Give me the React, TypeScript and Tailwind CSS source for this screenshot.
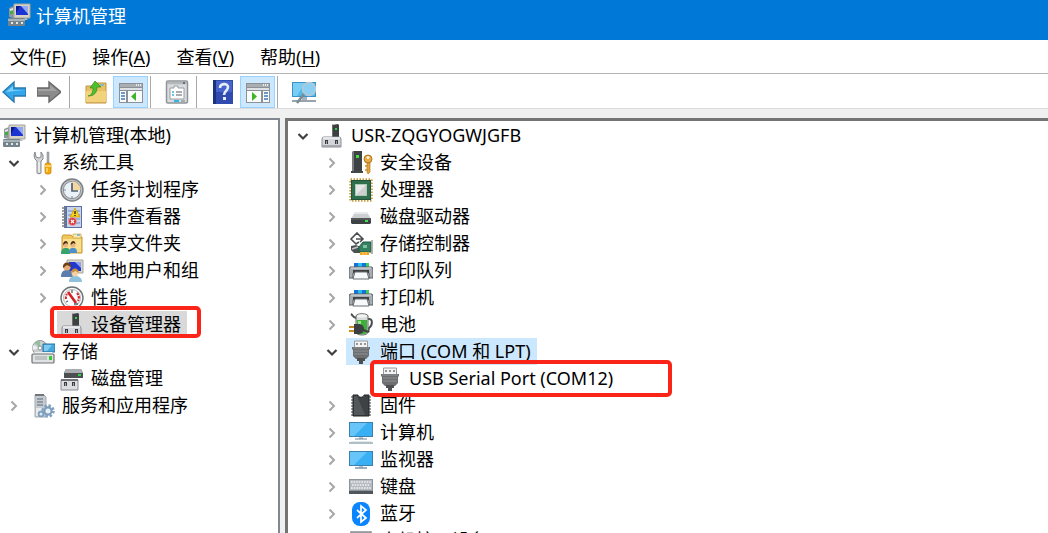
import type { ReactNode } from "react";
import clsx from "clsx";

const Svg = ({ children }: { children: ReactNode }) => (
  <svg viewBox="0 0 24 24" className="h-6 w-6 shrink-0" aria-hidden="true">
    {children}
  </svg>
);

/* ---------- left tree icons ---------- */

const ComputerIcon = () => (
  <Svg>
    <path d="M2 5l5-2v12l-5-1z" fill="#8f979e" />
    <path d="M3 6l3-1v2L3 8z" fill="#dfe3e6" />
    <rect x="3" y="8" width="3" height="3" fill="#3fae3a" />
    <path d="M7 1h16v14H7z" fill="#d5d2c6" stroke="#a5a49c" strokeWidth="1" />
    <path d="M9 3h12v9H9z" fill="#1c35d2" />
    <path d="M14 3h7v8z" fill="#93a9f5" />
    <path d="M9 3h4l-4 7z" fill="#0a1a8c" />
    <path d="M12 15h7l2 2h-9z" fill="#b9b8ae" />
    <rect x="1" y="15" width="17" height="8" rx="1" fill="#75838b" />
    <path d="M1 17h17" stroke="#b8c4c9" strokeWidth="1.5" />
    <path d="M4 19h2v2H4zM9 19h2v2H9zM14 19h2v2h-2z" fill="#e2e8ea" />
  </Svg>
);

const ToolsIcon = () => (
  <Svg>
    <path
      d="M4 1L3 4l1 4 2 2v12c0 1 4 1 4 0V10l2-2V4l-2-3v5L8 7 5 6z"
      fill="#d3d6d8"
      stroke="#85898c"
      strokeWidth="1"
    />
    <path d="M8 11v10" stroke="#fff" strokeWidth="1" />
    <path d="M16 1h2v11h-2z" fill="#a9adb0" stroke="#7c8184" strokeWidth=".5" />
    <rect x="14" y="12" width="6" height="11" rx="2" fill="#f5a90b" stroke="#c47a00" strokeWidth=".7" />
    <path d="M14 15h6M16 17v4" stroke="#ffdf7e" strokeWidth="1.4" />
  </Svg>
);

const ClockIcon = () => (
  <Svg>
    <circle cx="12" cy="12" r="11" fill="#bfc2c4" stroke="#7d8184" strokeWidth="1.4" />
    <circle cx="12" cy="12" r="8.6" fill="#eaf1f8" stroke="#8c9094" strokeWidth="1" />
    <path d="M12 3.5a8.5 8.5 0 018.5 8.5H12z" fill="#f3d9a1" />
    <path d="M12 5v8h6" fill="none" stroke="#54606c" strokeWidth="1.7" />
    <path d="M12 18v2M4 12h2" stroke="#8b98a4" strokeWidth="1.2" />
  </Svg>
);

const EventIcon = () => (
  <Svg>
    <path d="M4 1h18v22H4z" fill="#5c6f9e" />
    <path d="M7 2h14v20H7z" fill="#c6d4ee" />
    <path d="M8 6h12M8 10h12M8 14h12M8 18h12" stroke="#6f8bc4" strokeWidth="1" />
    <path d="M2 3h4M2 6h4M2 9h4M2 12h4M2 15h4M2 18h4M2 21h4" stroke="#7b8087" strokeWidth="1.3" />
    <path d="M15 3l5 9H10z" fill="#fbd21b" stroke="#c79a00" strokeWidth=".7" />
    <path d="M15 6v3M15 10v1" stroke="#30280a" strokeWidth="1.4" />
    <circle cx="12.5" cy="16.5" r="4" fill="#d9383a" stroke="#f3b5b5" strokeWidth=".6" />
    <path d="M11 15l3 3M14 15l-3 3" stroke="#fff" strokeWidth="1.2" />
  </Svg>
);

const SharedFolderIcon = () => (
  <Svg>
    <path d="M2 5l1-2h8l2 2h9v16H2z" fill="#efc55c" stroke="#c99a35" strokeWidth="1" />
    <path d="M13 2h8v4h-8z" fill="#fbe9b4" stroke="#cfa544" strokeWidth=".7" />
    <path d="M17 3h3" stroke="#4aa2e0" strokeWidth="1.2" />
    <path d="M3 7h18v13H3z" fill="#fadf8e" />
    <path d="M1 22c0-5 2-6 5-6s4 1 4 6z" fill="#35a36b" />
    <path d="M9 21c0-4 1-5 4-5s4 1 4 5z" fill="#4f8fc9" />
    <circle cx="5.500" cy="13" r="2.500" fill="#e8b483" />
    <path d="M3 13c0-5 5-5 5-1l-2-1z" fill="#4c2f17" />
    <circle cx="13" cy="13" r="2.500" fill="#e8b483" />
    <path d="M10.500 13c0-5 5-5 5-1l-2-1z" fill="#4c2f17" />
  </Svg>
);

const UsersIcon = () => (
  <Svg>
    <path d="M7 1h16v13H7z" fill="#d8d5c8" stroke="#a8a69b" strokeWidth="1" />
    <path d="M9 3h12v9H9z" fill="#2038cc" />
    <path d="M15 3h6v6z" fill="#8ba3f2" />
    <path d="M1 18c0-6 3-7 6-7s6 1 6 7z" fill="#5a7fae" />
    <circle cx="7" cy="8" r="3.600" fill="#e6ad72" />
    <path d="M3 9c-1-7 9-7 8-1L7 6z" fill="#6d4018" />
    <path d="M9 23c0-5 3-6 6-6s7 1 7 6z" fill="#8fc1dd" />
    <circle cx="15" cy="14" r="3.400" fill="#f5d2a2" />
    <path d="M11.500 14c-1-6 8-6 7 0l-3-2z" fill="#c98d3c" />
  </Svg>
);

const GaugeIcon = () => (
  <Svg>
    <circle cx="12" cy="12" r="11" fill="#fdfdfd" stroke="#6f7376" strokeWidth="1.400" />
    <circle cx="12" cy="12" r="8.500" fill="none" stroke="#b4b8ba" strokeWidth="1" />
    <path d="M6 13a7 7 0 011-5M17 7a7 7 0 011 8" fill="none" stroke="#d42b2f" strokeWidth="2.200" strokeDasharray="2.500 1" />
    <path d="M8 6l8 11" stroke="#d31f26" strokeWidth="2.600" />
    <path d="M12 4v3M6 16l2-1M14 18h4" stroke="#5f6366" strokeWidth="1.300" />
  </Svg>
);

const DevicesIcon = () => (
  <Svg>
    <path d="M12 1l6-1 1 1v13h-7z" fill="#3d4043" />
    <path d="M12 1l1-1v14h-1z" fill="#6c7073" />
    <rect x="15" y="4" width="2" height="2" fill="#36d13b" />
    <path d="M3 13h17l1 2v8H2v-8z" fill="#d4d5da" stroke="#8b8e94" strokeWidth="1" />
    <path d="M3 14h17" stroke="#f0f1f3" strokeWidth="1.500" />
    <path d="M5 16h3v4H5zM15 16h3v4h-3z" fill="#3b3d41" />
    <path d="M6 17h1v3H6zM16 17h1v3h-1z" fill="#9a9da2" />
    <path d="M2 22h19" stroke="#9b9ea6" strokeWidth="1.600" />
  </Svg>
);

const StorageIcon = () => (
  <Svg>
    <circle cx="9" cy="8" r="7.500" fill="#c9cdd0" stroke="#92979b" strokeWidth="1" />
    <path d="M9 8L4 3a7 7 0 015-2z" fill="#8dc29a" />
    <path d="M9 8l-7 2a7 7 0 010-5z" fill="#eef0f1" />
    <circle cx="9" cy="8" r="2" fill="#fff" stroke="#8b9094" strokeWidth="1" />
    <path d="M12 4h12v8H12z" fill="#47a8dd" stroke="#27739f" strokeWidth="1" />
    <path d="M13 5h8l-5 6h-3z" fill="#7ecbf1" />
    <path d="M2 14l2-2h17l2 2z" fill="#eceeef" />
    <rect x="1" y="14" width="22" height="9" rx="1" fill="#dfe1e2" stroke="#6e7274" strokeWidth="1.200" />
    <path d="M4 17h12M4 19h12" stroke="#a0a4a6" strokeWidth="1" />
    <rect x="18" y="16" width="3" height="4" fill="#38c93a" />
  </Svg>
);

const DiskManageIcon = () => (
  <Svg>
    <path d="M6 2h15l2 4v5H4V6z" fill="#4b4f52" />
    <path d="M6 2h15l2 4H4z" fill="#a9adaf" />
    <rect x="18" y="7" width="3" height="2" fill="#32d04b" />
    <path d="M1 13h17v10H1z" fill="#dcdde0" stroke="#8a8c91" strokeWidth="1" />
    <path d="M1 13h17" stroke="#6f7276" strokeWidth="2" />
    <path d="M4 15h3v4H4zM12 15h3v4h-3z" fill="#3b3d41" />
    <path d="M5 16h1v3H5zM13 16h1v3h-1z" fill="#a0a2a6" />
  </Svg>
);

const ServicesIcon = () => (
  <Svg>
    <path d="M4 1h9l2 2v20H4z" fill="#c5cbd0" stroke="#a3abb1" strokeWidth="1" />
    <path d="M4 0h9v2H4z" fill="#6f777d" />
    <path d="M6 5h6M6 8h6M6 11h6" stroke="#7f8a92" strokeWidth="1.300" />
    <path d="M5 14h6v8H5z" fill="#e6eaed" />
    <circle cx="17" cy="17" r="5" fill="none" stroke="#7fa1bf" strokeWidth="3.500" strokeDasharray="2.200 1.700" />
    <circle cx="17" cy="17" r="3.600" fill="#e8f0f6" stroke="#7c9ebc" strokeWidth="2.200" />
    <circle cx="10" cy="20" r="2.400" fill="#dce8f1" stroke="#7c9ebc" strokeWidth="1.700" />
  </Svg>
);

/* ---------- right tree icons ---------- */

const SecurityIcon = () => (
  <Svg>
    <path d="M3 1l2-1h8v20H3z" fill="#3f4245" />
    <path d="M3 1l2-1v20H3z" fill="#777b7e" />
    <rect x="7" y="4" width="3" height="3" fill="#3be13d" />
    <path d="M2 20h12v2H2z" fill="#45484b" />
    <circle cx="19" cy="8" r="4" fill="#e6ab45" stroke="#b17a1d" strokeWidth="1" />
    <circle cx="19" cy="6.500" r="1.300" fill="#fff" />
    <path d="M18 12h3v9l-2 2-1-2z" fill="#e3a53d" stroke="#b17a1d" strokeWidth=".7" />
    <path d="M17 14v2M17 18v2" stroke="#c8902f" strokeWidth="1.500" />
  </Svg>
);

const CpuIcon = () => (
  <Svg>
    <rect x="1.500" y="1.500" width="21" height="21" fill="none" stroke="#c79c3f" strokeWidth="2.400" strokeDasharray="1.500 1.500" />
    <rect x="2.500" y="2.500" width="19" height="19" fill="#2f6f4d" stroke="#235339" strokeWidth="1" />
    <rect x="6.500" y="6.500" width="11" height="11" fill="#cfcfcf" stroke="#a8cbb5" strokeWidth="1" />
    <path d="M7 7h10L7 17z" fill="#e6e6e6" />
  </Svg>
);

const DriveIcon = () => (
  <Svg>
    <path d="M6 7h12l4 7H2z" fill="#cdced0" />
    <path d="M6 7h12l1 2H5z" fill="#e8e9ea" />
    <path d="M2 13h20v5l-1 1H3l-1-1z" fill="#3f4245" />
    <path d="M2 14h20" stroke="#686c6f" strokeWidth="1" />
    <rect x="16" y="15" width="3" height="2" fill="#43e052" />
  </Svg>
);

const ControllerIcon = () => (
  <Svg>
    <path d="M2 14l5-1 5 2v6H5l-3-3z" fill="#4d5154" />
    <path d="M3 17l6-2" stroke="#c2c5c7" strokeWidth="1.500" />
    <path d="M11 4L8 1 2 7l5 5 3-2M7 7h6M11 4l3 3-3 3" fill="none" stroke="#4a4d50" strokeWidth="1.600" />
    <path d="M10 15l4-5h8v10H10z" fill="#348060" stroke="#205a40" strokeWidth="1" />
    <path d="M14 13h4v3h-4z" fill="#7fc0a0" />
    <path d="M23 8v14" stroke="#9da1a4" strokeWidth="1.600" />
    <path d="M11 20h9v3h-9z" fill="#f2a51f" />
    <path d="M14 20v3M17 20v3" stroke="#fde0a0" strokeWidth=".8" />
  </Svg>
);

const PrinterIcon = () => (
  <Svg>
    <path d="M5 4h15v4H5z" fill="#1673d6" />
    <path d="M9 4h4v4H9z" fill="#27bdf0" />
    <path d="M17 4h3v4h-3z" fill="#3ccf5a" />
    <path d="M1 8h22l1 2v9h-4v-5H4v5H0v-9z" fill="#a7adb2" stroke="#565b5f" strokeWidth="1" />
    <path d="M2 9h20" stroke="#d9dde0" strokeWidth="1" />
    <path d="M4 11h16v3H4z" fill="#3b4043" />
    <path d="M6 13h12l2 7H4z" fill="#f8f9fa" stroke="#6b7074" strokeWidth="1" />
  </Svg>
);

const BatteryIcon = () => (
  <Svg>
    <path d="M19 6c5-1 5 6 1 9l-1 4" fill="none" stroke="#4b4e50" strokeWidth="2" />
    <path d="M2 1c2 1 1 3 5 4" fill="none" stroke="#4b4e50" strokeWidth="2" />
    <path d="M7 3c0-3 12-3 12 0v16c0 4-12 4-12 0z" fill="#d6dcd8" stroke="#5f6664" strokeWidth="1" />
    <path d="M8 7h10v12c0 3-10 3-10 0z" fill="#3fae3a" />
    <path d="M9 8h3v12H9z" fill="#9be08f" />
    <ellipse cx="13" cy="3" rx="5" ry="1.700" fill="#f0f3f1" />
    <path d="M5 11h4c4 0 6 2 6 5s-2 5-6 5H5z" fill="#3c3f41" />
    <path d="M0 14h5M0 18h5" stroke="#c58f24" strokeWidth="2" />
    <path d="M14 17c3 0 4 3 6 1" fill="none" stroke="#3c3f41" strokeWidth="2" />
  </Svg>
);

const PortIcon = () => (
  <Svg>
    <path d="M5.500 1h13v7h-13z" fill="#f3f3f3" stroke="#9a9a9a" strokeWidth="1" />
    <path d="M7 3h2v2H7zM11 3h2v2h-2zM15 3h2v2h-2z" fill="#969696" />
    <path d="M3 7h18v2l-1 1v6l-3 3H7l-3-3v-6L3 9z" fill="#6d6f71" />
    <path d="M4 8h16M5 11h14M5 14h14" stroke="#8f9294" strokeWidth="1" />
    <path d="M8 18h8v3h-2v3h-4v-3H8z" fill="#4d4f51" />
  </Svg>
);

const FirmwareIcon = () => (
  <Svg>
    <path
      d="M2 3h3M2 6h3M2 9h3M2 12h3M2 15h3M2 18h3M2 21h3M19 3h3M19 6h3M19 9h3M19 12h3M19 15h3M19 18h3M19 21h3"
      stroke="#7b7f82"
      strokeWidth="1.600"
    />
    <path d="M4 1h5c0 3 6 3 6 0h5v21H4z" fill="#3f4245" stroke="#222426" strokeWidth="1" />
    <path d="M5 2h3l8 19H5z" fill="#54575a" />
  </Svg>
);

const Screen = () => (
  <>
    <path d="M0 2h24v15H0z" fill="#3c81ad" />
    <path d="M1 3h22v13H1z" fill="#3ab0f4" />
    <path d="M1 3h17L5 16H1z" fill="#68c5fa" />
    <path d="M10 17h4v2h-4z" fill="#bcc6cc" />
  </>
);

const PcIcon = () => (
  <Svg>
    <g transform="translate(0 -1)">
      <Screen />
      <path d="M6 19h12" stroke="#6e8796" strokeWidth="1" />
      <path d="M2 21h20l2 3H0z" fill="#e3e8eb" />
      <path d="M0 23h24" stroke="#9fb0ba" strokeWidth="1.500" />
    </g>
  </Svg>
);

const MonitorIcon = () => (
  <Svg>
    <g transform="translate(0 1)">
      <Screen />
      <path d="M6 19h12" stroke="#7d98a8" strokeWidth="1.500" />
    </g>
  </Svg>
);

const KeyboardIcon = () => (
  <Svg>
    <path d="M0 4h24v15H0z" fill="#8d949a" />
    <path d="M1 5h22v10H1z" fill="#b4babf" />
    <path d="M2 7h20M3 10h18M2 13h20" stroke="#f1f3f4" strokeWidth="1.600" strokeDasharray="1.600 1" />
    <path d="M0 16h24v3H0z" fill="#50575c" />
  </Svg>
);

const BluetoothIcon = () => (
  <Svg>
    <rect x="3" y="0" width="18" height="24" rx="8" fill="#0a84ff" />
    <path d="M8 8l9 8-5 4V4l5 4-9 8" fill="none" stroke="#fff" strokeWidth="1.700" />
  </Svg>
);

const HidIcon = () => (
  <Svg>
    <path d="M2 3h20v16H2z" fill="#c9ccd0" stroke="#868b90" strokeWidth="1.500" />
  </Svg>
);

/* ---------- toolbar icons ---------- */

const ArrowIcon = ({ forward }: { forward?: boolean }) => (
  <Svg>
    {forward ? (
      <>
        <path d="M0 8h12V2l12 10-12 10v-6H0z" fill="#8b8b8b" stroke="#686868" strokeWidth="1.400" />
        <path d="M1 9h12V5l7 6H1z" fill="#a3a3a3" />
      </>
    ) : (
      <>
        <path d="M24 8H12V2L1 12l11 10v-6h12z" fill="#33a7ec" stroke="#2a78ab" strokeWidth="1.400" />
        <path d="M22 10H11V6l-7 6z" fill="#7fd0fa" />
      </>
    )}
  </Svg>
);

const FolderUpIcon = () => (
  <Svg>
    <path d="M2 6h8l2-3h10v20H2z" fill="#e9c064" stroke="#bf9440" strokeWidth="1" />
    <path d="M2 11h20v11H2z" fill="#f3d27c" />
    <path d="M16 5h4" stroke="#6cb5e6" strokeWidth="1.500" />
    <path d="M4 16c4-1 5-4 5-8H6l5-7 6 6h-4c0 6-3 9-9 9z" fill="#4fbf2f" stroke="#2f8f1b" strokeWidth=".7" />
  </Svg>
);

const PanelIcon = ({ right }: { right?: boolean }) => (
  <Svg>
    <path d="M0 3h24v20H0z" fill="#8b9197" />
    <path d="M1 4h22v3H1z" fill="#a9aeb3" />
    <path d="M17 5h1M19 5h1M21 5h1" stroke="#fff" strokeWidth="1.300" />
    <path d="M1 8h22v2H1z" fill="#dfe2e4" />
    <path d={right ? "M1 11h14v11H1zM17 11h6v11h-6z" : "M1 11h6v11H1zM9 11h14v11H9z"} fill="#fafbfb" />
    <path
      d={right ? "M18 13h4M18 16h4M18 19h4" : "M2 13h4M2 16h4M2 19h4"}
      stroke="#3d7ab8"
      strokeWidth="1.500"
    />
    <path d={right ? "M6 12l5 4.500-5 4.500z" : "M17 12l-5 4.500 5 4.500z"} fill="#3fb527" />
  </Svg>
);

const PropertiesIcon = () => (
  <Svg>
    <rect x="1.500" y="1" width="21" height="22" rx="1.500" fill="#d9dcde" stroke="#8f9498" strokeWidth="1.500" />
    <path d="M2 3h20" stroke="#b2b7ba" strokeWidth="2.500" />
    <path d="M18 3h2" stroke="#54595d" strokeWidth="1.500" />
    <path d="M5 8h4V6h4v2h6v11H5z" fill="#fff" stroke="#989da1" strokeWidth="1" />
    <path d="M7 12h2M7 15h2" stroke="#38b7e8" strokeWidth="1.500" />
    <path d="M11 12h6M11 15h6" stroke="#8d9296" strokeWidth="1.500" />
    <path d="M9 20h5v2H9z" fill="#2fb4ea" />
    <path d="M16 20h4v2h-4z" fill="#a8adb1" />
  </Svg>
);

const HelpIcon = () => (
  <Svg>
    <path d="M2 0h20v24H2z" fill="#2f4bb0" />
    <path d="M2 0h3v24H2z" fill="#1d327f" />
    <path d="M5 1h16v11H5z" fill="#4565cc" />
    <path d="M9 8c0-5 8-5 8-1 0 4-4 4-4 8" fill="none" stroke="#e8ecf8" strokeWidth="2.600" />
    <rect x="12" y="17" width="3" height="3" fill="#e8ecf8" />
  </Svg>
);

const ScanIcon = () => (
  <Svg>
    <path d="M0 2h24v15H0z" fill="#3793c8" />
    <path d="M1 3h22v13H1z" fill="#4fb8ec" />
    <path d="M1 3h12L5 16H1z" fill="#7acdf3" />
    <path d="M10 17h5v3h-5z" fill="#a6b3bb" />
    <path d="M0 21h24" stroke="#97a4ac" strokeWidth="2" />
    <circle cx="17" cy="9" r="6.500" fill="#8ccff2" stroke="#b3c9d6" strokeWidth="1.500" />
    <path d="M12 14l-7 9" stroke="#7c8a93" strokeWidth="2.600" />
  </Svg>
);

/* ---------- trees ---------- */

type Item = {
  label: string;
  icon: () => ReactNode;
  state?: "open" | "closed";
  // background of the selected row
  selected?: "gray" | "blue";
  mark?: "short" | "long";
  children?: Item[];
};

const consoleTree: Item[] = [
  {
    label: "系统工具",
    icon: ToolsIcon,
    state: "open",
    children: [
      { label: "任务计划程序", icon: ClockIcon, state: "closed" },
      { label: "事件查看器", icon: EventIcon, state: "closed" },
      { label: "共享文件夹", icon: SharedFolderIcon, state: "closed" },
      { label: "本地用户和组", icon: UsersIcon, state: "closed" },
      { label: "性能", icon: GaugeIcon, state: "closed" },
      { label: "设备管理器", icon: DevicesIcon, selected: "gray", mark: "short" },
    ],
  },
  {
    label: "存储",
    icon: StorageIcon,
    state: "open",
    children: [{ label: "磁盘管理", icon: DiskManageIcon }],
  },
  { label: "服务和应用程序", icon: ServicesIcon, state: "closed" },
];

const deviceTree: Item[] = [
  {
    label: "USR-ZQGYOGWJGFB",
    icon: DevicesIcon,
    state: "open",
    children: [
      { label: "安全设备", icon: SecurityIcon, state: "closed" },
      { label: "处理器", icon: CpuIcon, state: "closed" },
      { label: "磁盘驱动器", icon: DriveIcon, state: "closed" },
      { label: "存储控制器", icon: ControllerIcon, state: "closed" },
      { label: "打印队列", icon: PrinterIcon, state: "closed" },
      { label: "打印机", icon: PrinterIcon, state: "closed" },
      { label: "电池", icon: BatteryIcon, state: "closed" },
      {
        label: "端口 (COM 和 LPT)",
        icon: PortIcon,
        state: "open",
        selected: "blue",
        children: [{ label: "USB Serial Port (COM12)", icon: PortIcon, mark: "long" }],
      },
      { label: "固件", icon: FirmwareIcon, state: "closed" },
      { label: "计算机", icon: PcIcon, state: "closed" },
      { label: "监视器", icon: MonitorIcon, state: "closed" },
      { label: "键盘", icon: KeyboardIcon, state: "closed" },
      { label: "蓝牙", icon: BluetoothIcon, state: "closed" },
      { label: "人机接口设备", icon: HidIcon, state: "closed" },
    ],
  },
];

const Toggle = ({ item }: { item: Item }) => {
  if (!item.state) return <span className="w-5 shrink-0" />;
  const open = item.state === "open";
  return (
    <button
      type="button"
      aria-label={item.label}
      aria-expanded={open}
      className="flex h-5 w-5 shrink-0 items-center justify-center"
    >
      <svg viewBox="0 0 12 12" className="h-3 w-3" fill="none">
        {open ? (
          <path d="M1.500 4L6 8.500 10.500 4" stroke="#404040" strokeWidth="2.200" />
        ) : (
          <path d="M3.500 1.500L8 6l-4.500 4.500" stroke="#a6a6a6" strokeWidth="2" />
        )}
      </svg>
    </button>
  );
};

const Tree = ({ items }: { items: Item[] }) => (
  <ul>
    {items.map((item) => (
      <li key={item.label}>
        <div className="relative flex h-[27px] items-center gap-1">
          <Toggle item={item} />
          <span
            className={clsx(
              "flex h-full items-center gap-[7px] pr-[6px] pl-[3px] whitespace-nowrap",
              item.selected === "gray" && "bg-[#d9d9d9]",
              item.selected === "blue" && "bg-[#cce8ff]"
            )}
          >
            <item.icon />
            {item.label}
          </span>
          {item.mark === "short" && (
            <span className="absolute -top-[5px] bottom-0 left-[17px] z-10 w-[151px] rounded-[5px] border-4 border-[#fb2418]" />
          )}
          {item.mark === "long" && (
            <span className="absolute -inset-y-[5px] left-[19px] z-10 w-[302px] rounded-[5px] border-4 border-[#fb2418]" />
          )}
        </div>
        {item.children && (
          <div className="pl-[29px]">
            <Tree items={item.children} />
          </div>
        )}
      </li>
    ))}
  </ul>
);

/* ---------- window ---------- */

const menus = [
  ["文件", "F"],
  ["操作", "A"],
  ["查看", "V"],
  ["帮助", "H"],
];

const ToolButton = ({
  label,
  active,
  children,
}: {
  label: string;
  active?: boolean;
  children: ReactNode;
}) => (
  <button
    type="button"
    aria-label={label}
    className={clsx(
      "flex h-full w-[35px] items-center justify-center",
      active && "border border-[#99d1ff] bg-[#cce8ff]"
    )}
  >
    {children}
  </button>
);

const Separator = () => <span className="mr-2 ml-[2px] w-px bg-[#a8a8a8]" />;

const App = () => {
  return (
    <main className="flex h-screen flex-col overflow-hidden bg-[#f0f0f0] font-['Noto_Sans','Noto_Sans_CJK_SC',sans-serif] text-[18px] leading-[27px] text-black">
      <header className="flex h-10 shrink-0 items-start gap-[5px] bg-[#0078d7] pt-[3px] pl-[7px] text-white">
        <ComputerIcon />
        <h1>计算机管理</h1>
      </header>

      <nav className="flex h-[34px] shrink-0 items-center gap-[26px] border-b border-[#b4b4b4] bg-white pt-px pl-[10px]">
        {menus.map(([name, key]) => (
          <button type="button" key={key}>
            {name}(<span className="underline underline-offset-2">{key}</span>)
          </button>
        ))}
      </nav>

      <div className="flex h-[35px] shrink-0 border-b border-[#dcdcdc] bg-white pt-[2px]">
        <div className="flex gap-[11px] pr-[6px] pl-[2px]">
          <button type="button" aria-label="后退">
            <ArrowIcon />
          </button>
          <button type="button" aria-label="前进">
            <ArrowIcon forward />
          </button>
        </div>
        <Separator />
        <ToolButton label="向上一级">
          <FolderUpIcon />
        </ToolButton>
        <ToolButton label="显示/隐藏控制台树" active>
          <PanelIcon />
        </ToolButton>
        <Separator />
        <ToolButton label="属性">
          <PropertiesIcon />
        </ToolButton>
        <Separator />
        <ToolButton label="帮助">
          <HelpIcon />
        </ToolButton>
        <ToolButton label="显示/隐藏操作窗格" active>
          <PanelIcon right />
        </ToolButton>
        <Separator />
        <ToolButton label="扫描检测硬件改动">
          <ScanIcon />
        </ToolButton>
      </div>

      <div className="flex min-h-0 flex-1 gap-[5px] pt-[9px]">
        <section
          aria-label="控制台树"
          className="w-[280px] shrink-0 overflow-hidden border-t-2 border-r-2 border-[#828790] bg-white pt-[2px]"
        >
          <div className="flex h-[27px] items-center gap-2 pl-[2px]">
            <ComputerIcon />
            计算机管理(本地)
          </div>
          <div className="pl-1">
            <Tree items={consoleTree} />
          </div>
        </section>
        <section
          aria-label="设备"
          className="min-w-0 flex-1 overflow-hidden border-t-3 border-l-3 border-[#747474] bg-white pt-px pl-[5px]"
        >
          <Tree items={deviceTree} />
        </section>
      </div>
    </main>
  );
};

export default App;
